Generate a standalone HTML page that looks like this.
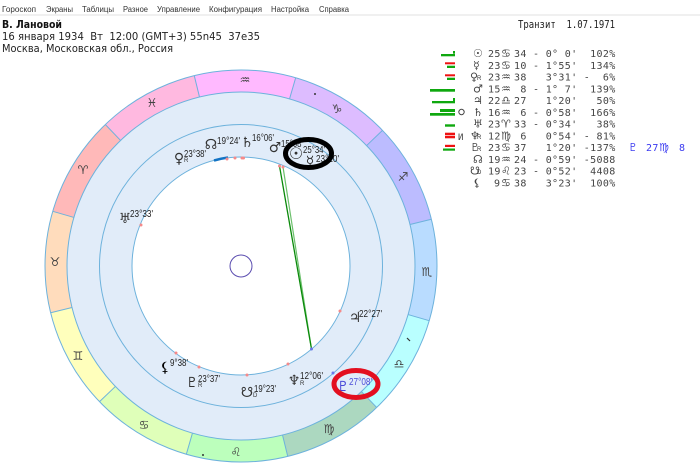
<!DOCTYPE html>
<html><head><meta charset="utf-8"><style>
html,body{margin:0;padding:0;background:#fff;width:700px;height:473px;overflow:hidden}
#wheel{position:absolute;left:45px;top:70px;width:392px;height:392px;border-radius:50%;background:conic-gradient(from -13.8deg,#ffb9ff 0 30deg,#ddbcff 30deg 60deg,#bcbcff 60deg 90deg,#b9dcff 90deg 120deg,#b9ffff 120deg 150deg,#acd8c0 150deg 180deg,#bcffbc 180deg 210deg,#dfffb9 210deg 240deg,#ffffbc 240deg 270deg,#ffdcbc 270deg 300deg,#ffb9b9 300deg 330deg,#ffb9e0 330deg 360deg)}
svg{display:block;position:absolute;left:0;top:0}
text{white-space:pre}
.m{font:8px "Liberation Sans",sans-serif;fill:#333}
.h{font:11px "DejaVu Sans",sans-serif;fill:#222}
.t{font:10px "DejaVu Sans Mono",monospace;fill:#444;letter-spacing:.33px}
.g{font:11px "DejaVu Sans",sans-serif;fill:#444}
.l{font:10.5px "Liberation Sans",sans-serif;fill:#222}
.p{font:14px "DejaVu Sans",sans-serif;fill:#333;text-anchor:middle}
.s{font:6px "Liberation Sans",sans-serif;fill:#333}
.z{font:12px "DejaVu Sans",sans-serif;fill:#444;text-anchor:middle}
</style></head><body>
<div id="wheel"></div>
<svg width="700" height="473" viewBox="0 0 700 473" xmlns="http://www.w3.org/2000/svg">
<rect y="14" width="700" height="2" fill="#f0f0f0"/>
<text class="m" x="2" y="12" textLength="34" lengthAdjust="spacingAndGlyphs">Гороскоп</text>
<text class="m" x="46" y="12" textLength="27" lengthAdjust="spacingAndGlyphs">Экраны</text>
<text class="m" x="82" y="12" textLength="32" lengthAdjust="spacingAndGlyphs">Таблицы</text>
<text class="m" x="123" y="12" textLength="25" lengthAdjust="spacingAndGlyphs">Разное</text>
<text class="m" x="157" y="12" textLength="43" lengthAdjust="spacingAndGlyphs">Управление</text>
<text class="m" x="209" y="12" textLength="53" lengthAdjust="spacingAndGlyphs">Конфигурация</text>
<text class="m" x="271" y="12" textLength="38" lengthAdjust="spacingAndGlyphs">Настройка</text>
<text class="m" x="319" y="12" textLength="30" lengthAdjust="spacingAndGlyphs">Справка</text>

<text class="h" x="2" y="28" style="font-weight:bold;fill:#111" textLength="60" lengthAdjust="spacingAndGlyphs">В. Лановой</text>
<text class="h" x="2" y="40" textLength="258" lengthAdjust="spacingAndGlyphs">16 января 1934  Вт  12:00 (GMT+3) 55n45  37e35</text>
<text class="h" x="2" y="52" textLength="171" lengthAdjust="spacingAndGlyphs">Москва, Московская обл., Россия</text>
<text class="h" x="518" y="28" style="font-family:'DejaVu Sans Mono',monospace;font-size:10.5px" textLength="97" lengthAdjust="spacingAndGlyphs">Транзит  1.07.1971</text>

<!-- Zodiac wheel -->
<circle cx="241" cy="266" r="196" fill="none" stroke="#6db2dc" stroke-width="1"/>
<g stroke="#6db2dc" stroke-width="1">
<line x1="241" y1="70" x2="241" y2="92" transform="rotate(-13.8 241 266)"/>
<line x1="241" y1="70" x2="241" y2="92" transform="rotate(-43.8 241 266)"/>
<line x1="241" y1="70" x2="241" y2="92" transform="rotate(-73.8 241 266)"/>
<line x1="241" y1="70" x2="241" y2="92" transform="rotate(-103.8 241 266)"/>
<line x1="241" y1="70" x2="241" y2="92" transform="rotate(-133.8 241 266)"/>
<line x1="241" y1="70" x2="241" y2="92" transform="rotate(-163.8 241 266)"/>
<line x1="241" y1="70" x2="241" y2="92" transform="rotate(-193.8 241 266)"/>
<line x1="241" y1="70" x2="241" y2="92" transform="rotate(-223.8 241 266)"/>
<line x1="241" y1="70" x2="241" y2="92" transform="rotate(-253.8 241 266)"/>
<line x1="241" y1="70" x2="241" y2="92" transform="rotate(-283.8 241 266)"/>
<line x1="241" y1="70" x2="241" y2="92" transform="rotate(-313.8 241 266)"/>
<line x1="241" y1="70" x2="241" y2="92" transform="rotate(-343.8 241 266)"/>
</g>
<circle cx="241" cy="266" r="174" fill="#e1ecf9" stroke="#6db2dc" stroke-width="1"/>
<circle cx="241" cy="266" r="141.5" fill="none" stroke="#6db2dc" stroke-width="1"/>
<circle cx="241" cy="266" r="109" fill="#fff" stroke="#6db2dc" stroke-width="1"/>
<circle cx="241" cy="266" r="11" fill="#fff" stroke="#5b4db0" stroke-width="1"/>

<!-- Sign glyphs -->
<text class="z" x="245" y="84">♒</text>
<text class="z" x="337" y="113">♑</text>
<text class="z" x="403" y="181">♐</text>
<text class="z" x="427" y="276">♏</text>
<text class="z" x="399" y="368">♎</text>
<text class="z" x="329" y="433">♍</text>
<text class="z" x="236" y="456">♌</text>
<text class="z" x="144" y="429">♋</text>
<text class="z" x="78" y="360">♊</text>
<text class="z" x="55" y="266">♉</text>
<text class="z" x="83" y="174">♈</text>
<text class="z" x="152" y="107">♓</text>
<circle cx="315" cy="94" r="1" fill="#333"/>
<circle cx="203" cy="455" r="1" fill="#333"/>
<line x1="407" y1="338" x2="410" y2="341" stroke="#333" stroke-width="1.2"/>

<!-- Aspect lines -->
<line x1="283" y1="167" x2="311.5" y2="349" stroke="#6cc06c" stroke-width="1.2"/>
<line x1="279.5" y1="166" x2="311.5" y2="349" stroke="#0a8a0a" stroke-width="1.3"/>

<!-- Ring points -->
<path d="M214 160.500Q221 158.500 228 157.500" fill="none" stroke="#1273c4" stroke-width="2.500"/>
<g fill="#f58a8a">
<circle cx="227" cy="159" r="1.500"/><circle cx="235" cy="158" r="1.500"/><circle cx="242" cy="158" r="1.500"/><circle cx="243.500" cy="158" r="1.500"/>
<circle cx="279.500" cy="166" r="1.500"/><circle cx="283" cy="167" r="1.500"/><circle cx="141" cy="225" r="1.500"/>
<circle cx="176" cy="353" r="1.500"/><circle cx="199" cy="367" r="1.500"/><circle cx="247" cy="375" r="1.500"/><circle cx="288" cy="364" r="1.500"/><circle cx="340" cy="311" r="1.500"/>
</g>
<circle cx="311.500" cy="349" r="1.500" fill="#6a78e8"/>
<circle cx="333" cy="373" r="1.500" fill="#6a78e8"/>

<!-- Chart planets -->
<text class="p" x="179" y="163">♀</text><text class="l" x="184" y="157" textLength="22" lengthAdjust="spacingAndGlyphs">23°38'</text><text class="s" x="184" y="162">R</text>
<text class="p" x="211" y="149">☊</text><text class="l" x="217" y="144" textLength="23" lengthAdjust="spacingAndGlyphs">19°24'</text>
<text class="p" x="247" y="147">♄</text><text class="l" x="252" y="141" textLength="22" lengthAdjust="spacingAndGlyphs">16°06'</text>
<text class="p" x="275" y="152">♂</text><text class="l" x="281" y="147" textLength="22" lengthAdjust="spacingAndGlyphs">15°08'</text>
<text class="p" x="296" y="159" style="font-size:16px">☉</text><text class="l" x="303" y="153" textLength="22" lengthAdjust="spacingAndGlyphs">25°34'</text>
<text class="p" x="310" y="166">☿</text><text class="l" x="316" y="162" textLength="23" lengthAdjust="spacingAndGlyphs">23°10'</text>
<text class="p" x="125" y="223">♅</text><text class="l" x="130" y="217" textLength="23" lengthAdjust="spacingAndGlyphs">23°33'</text>
<text class="p" x="355" y="322">♃</text><text class="l" x="359" y="317" textLength="23" lengthAdjust="spacingAndGlyphs">22°27'</text>
<text class="p" x="294" y="385">♆</text><text class="l" x="300" y="379" textLength="23" lengthAdjust="spacingAndGlyphs">12°06'</text><text class="s" x="300" y="385">R</text>
<text class="p" x="343" y="391" style="fill:#4a4ad8">♇</text><text class="l" style="fill:#4a4ad8" x="349" y="385" textLength="23" lengthAdjust="spacingAndGlyphs">27°08'</text>
<text class="p" x="247" y="397">☋</text><text class="l" x="254" y="392" textLength="22" lengthAdjust="spacingAndGlyphs">19°23'</text><text class="s" x="253" y="397">D</text>
<text class="p" x="192" y="387">♇</text><text class="l" x="198" y="382" textLength="22" lengthAdjust="spacingAndGlyphs">23°37'</text><text class="s" x="198" y="387">R</text>
<text class="p" x="165" y="372" style="fill:#000;font-weight:bold">⚸</text><text class="l" x="170" y="366" textLength="18" lengthAdjust="spacingAndGlyphs">9°38'</text>

<!-- Highlight ellipses -->
<ellipse cx="308.500" cy="153.500" rx="23" ry="14" fill="none" stroke="#000" stroke-width="5"/>
<ellipse cx="356" cy="384" rx="22" ry="13.500" fill="none" stroke="#e30f1f" stroke-width="5"/>

<!-- Bars -->
<g fill="#0fa80f">
<rect x="441" y="54" width="14" height="2.300"/><rect x="453" y="51" width="2" height="2.700"/>
<rect x="447" y="65.700" width="8" height="2.300"/>
<rect x="447" y="77.700" width="8" height="2.300"/>
<rect x="430" y="89" width="25" height="2.700"/>
<rect x="432" y="101" width="23" height="2.300"/><rect x="453" y="98" width="2" height="3"/>
<rect x="430" y="113" width="25" height="2.700"/><rect x="440" y="109" width="15" height="3"/>
<rect x="445" y="124.300" width="10" height="2.400"/>
<rect x="443" y="148.500" width="12" height="2.200"/>
</g>
<g fill="#ee1111">
<rect x="445" y="62.300" width="10" height="2"/>
<rect x="445" y="74.300" width="10" height="2"/>
<rect x="445" y="132.700" width="10" height="2.300"/><rect x="445" y="135.700" width="10" height="2.600"/>
<rect x="445" y="144.800" width="10" height="2.200"/>
</g>
<circle cx="461.500" cy="112" r="2.700" fill="none" stroke="#444" stroke-width="1"/>
<text class="t" x="458" y="140" style="font-size:9px">И</text>

<!-- Table -->
<g>
<text class="g" x="473" y="57">☉</text><text class="t" x="488" y="57">25</text><text class="g" x="501" y="57">♋</text><text class="t" x="514" y="57">34</text><text class="t" x="533" y="57">- 0° 0'  102%</text>
<text class="g" x="473" y="68.800">☿</text><text class="t" x="488" y="68.800">23</text><text class="g" x="501" y="68.800">♋</text><text class="t" x="514" y="68.800">10</text><text class="t" x="533" y="68.800">- 1°55'  134%</text>
<text class="g" x="470" y="80.500">♀</text><text class="s" x="477" y="80">R</text><text class="t" x="488" y="80.500">23</text><text class="g" x="501" y="80.500">♒</text><text class="t" x="514" y="80.500">38</text><text class="t" x="533" y="80.500">  3°31' -  6%</text>
<text class="g" x="473" y="92.300">♂</text><text class="t" x="488" y="92.300">15</text><text class="g" x="501" y="92.300">♒</text><text class="t" x="514" y="92.300"> 8</text><text class="t" x="533" y="92.300">- 1° 7'  139%</text>
<text class="g" x="473" y="104">♃</text><text class="t" x="488" y="104">22</text><text class="g" x="501" y="104">♎</text><text class="t" x="514" y="104">27</text><text class="t" x="533" y="104">  1°20'   50%</text>
<text class="g" x="473" y="115.800">♄</text><text class="t" x="488" y="115.800">16</text><text class="g" x="501" y="115.800">♒</text><text class="t" x="514" y="115.800"> 6</text><text class="t" x="533" y="115.800">- 0°58'  166%</text>
<text class="g" x="473" y="127.600">♅</text><text class="t" x="488" y="127.600">23</text><text class="g" x="501" y="127.600">♈</text><text class="t" x="514" y="127.600">33</text><text class="t" x="533" y="127.600">- 0°34'   38%</text>
<text class="g" x="470" y="139.300">♆</text><text class="s" x="477" y="139">R</text><text class="t" x="488" y="139.300">12</text><text class="g" x="501" y="139.300">♍</text><text class="t" x="514" y="139.300"> 6</text><text class="t" x="533" y="139.300">  0°54' - 81%</text>
<text class="g" x="470" y="151.100">♇</text><text class="s" x="477" y="151">R</text><text class="t" x="488" y="151.100">23</text><text class="g" x="501" y="151.100">♋</text><text class="t" x="514" y="151.100">37</text><text class="t" x="533" y="151.100">  1°20' -137%</text>
<text class="g" x="473" y="162.800">☊</text><text class="t" x="488" y="162.800">19</text><text class="g" x="501" y="162.800">♒</text><text class="t" x="514" y="162.800">24</text><text class="t" x="533" y="162.800">- 0°59' -5088</text>
<text class="g" x="470" y="174.600">☋</text><text class="s" x="477" y="174">D</text><text class="t" x="488" y="174.600">19</text><text class="g" x="501" y="174.600">♌</text><text class="t" x="514" y="174.600">23</text><text class="t" x="533" y="174.600">- 0°52'  4408</text>
<text class="g" x="473" y="186.400" style="font-weight:bold">⚸</text><text class="t" x="494" y="186.400">9</text><text class="g" x="501" y="186.400">♋</text><text class="t" x="514" y="186.400">38</text><text class="t" x="533" y="186.400">  3°23'  100%</text>
<text class="g" x="628" y="151.100" style="fill:#3a3af0">♇</text><text class="t" style="fill:#3a3af0" x="646" y="151.100">27</text><text class="g" style="fill:#3a3af0" x="659" y="151.100">♍</text><text class="t" style="fill:#3a3af0" x="679" y="151.100">8</text>
</g>
</svg>
</body></html>
